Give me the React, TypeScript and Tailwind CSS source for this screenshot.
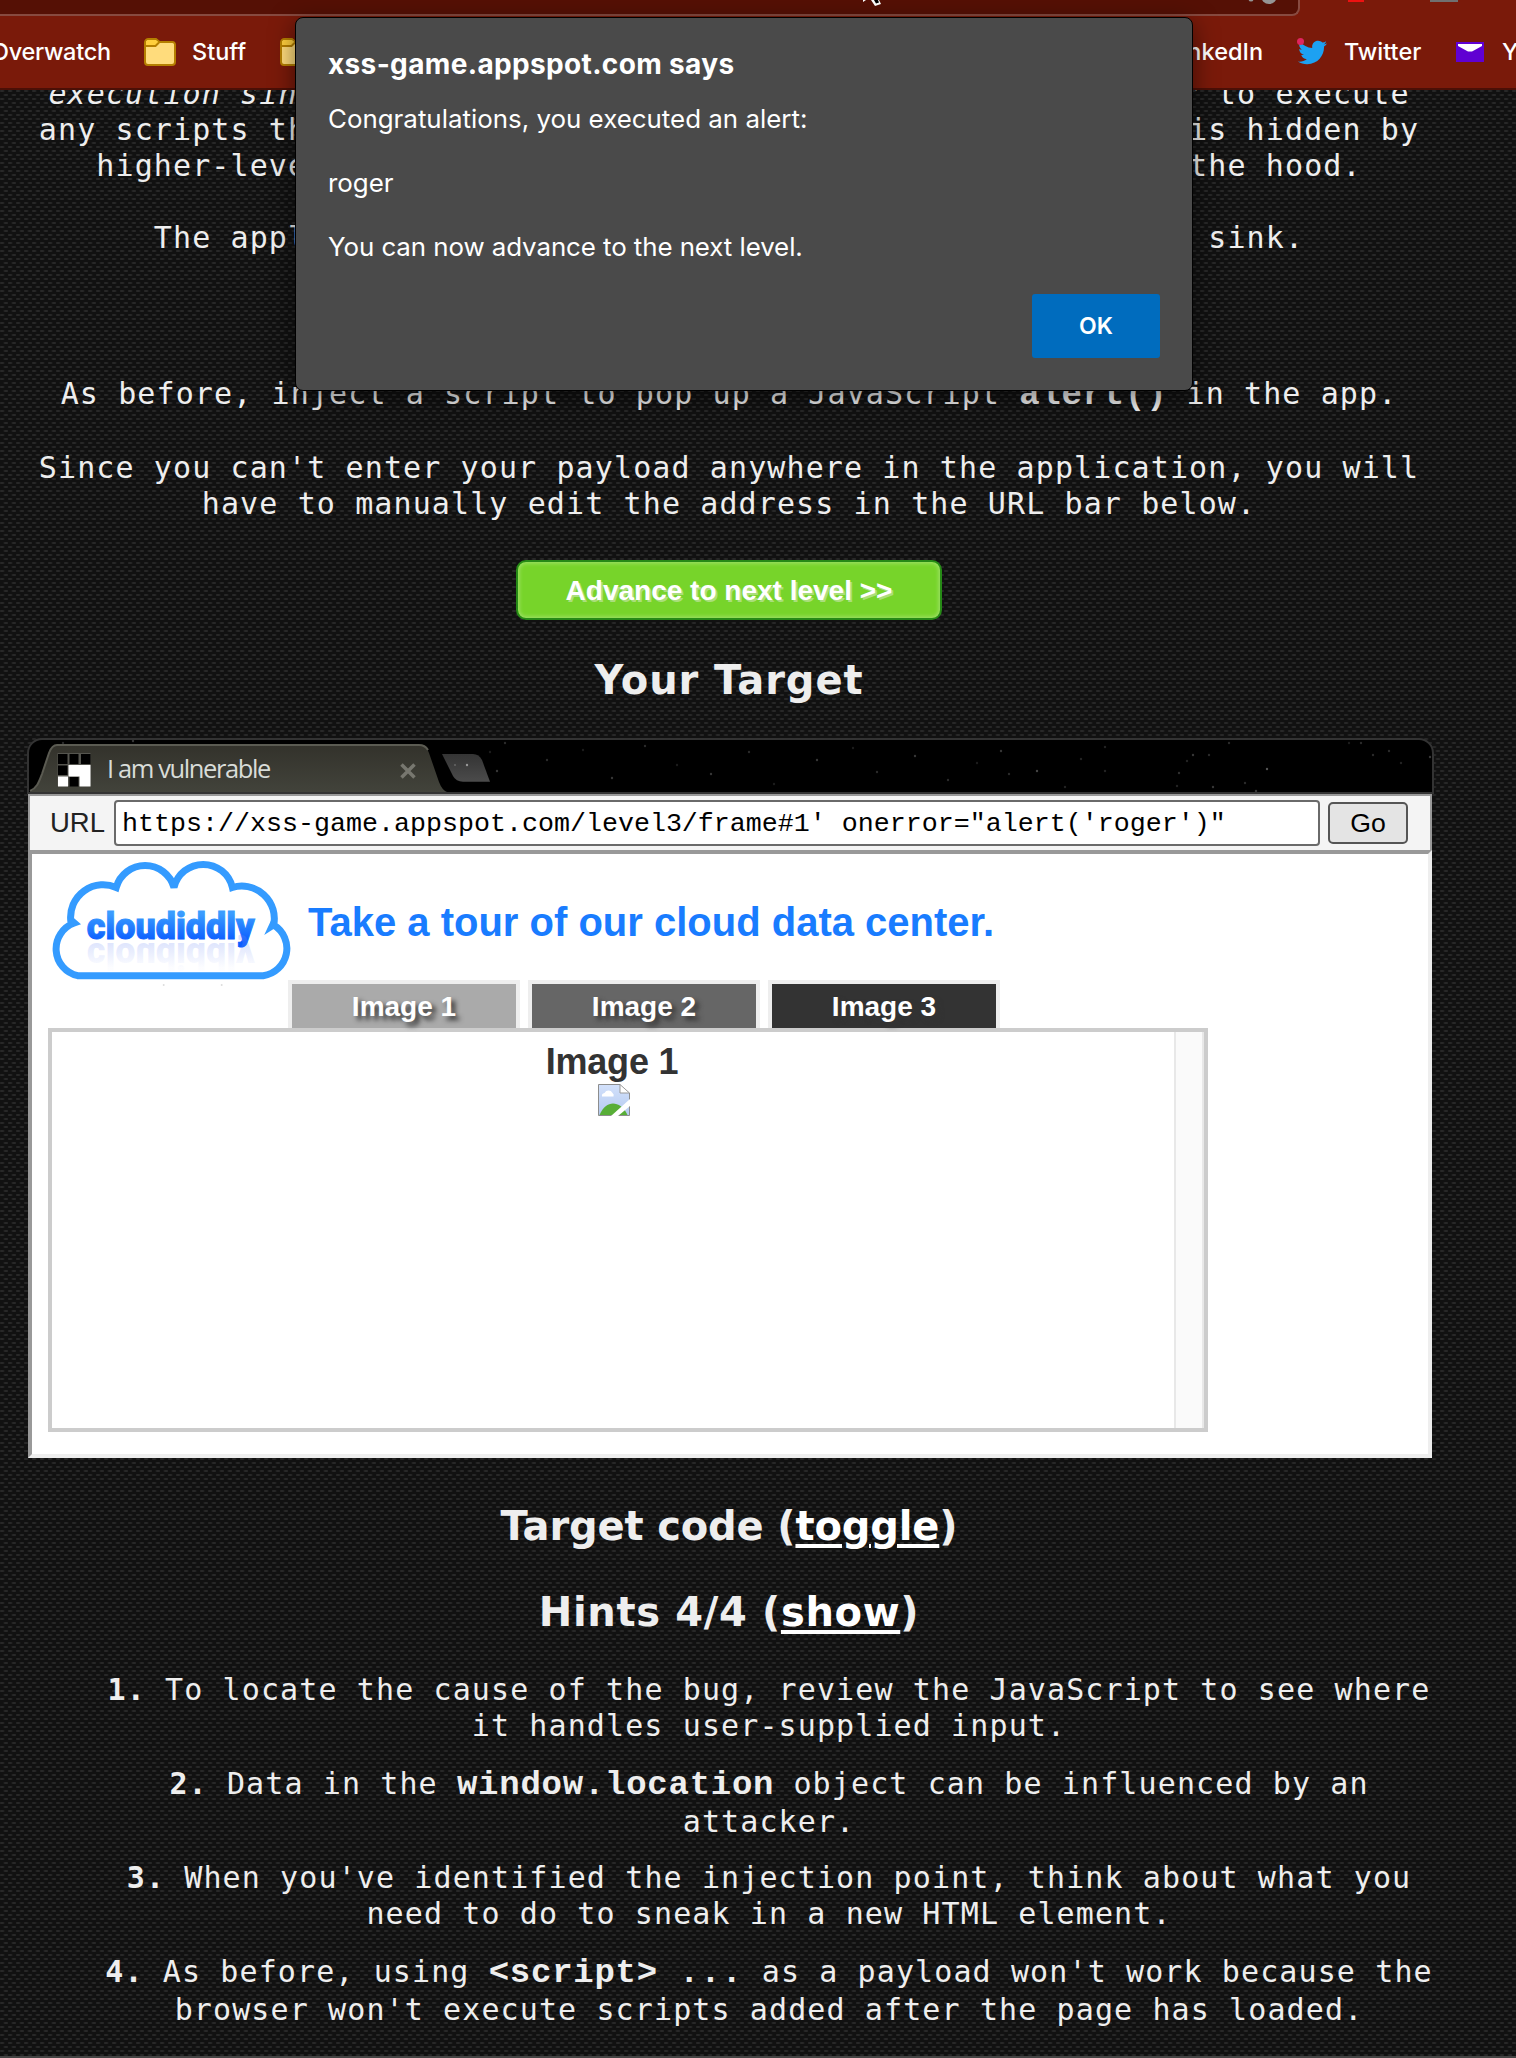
import React from "react";
import { FaTwitter } from "react-icons/fa";

const stars: [number, number, number][] = [
  [1078, 9, 0.25], [974, 13, 0.4], [1054, 21, 0.25], [1010, 33, 0.5], [982, 36, 0.3], [1166, 17, 0.4],
  [1160, 23, 0.25], [1182, 17, 0.3], [1152, 35, 0.35], [1240, 31, 0.6], [1202, 5, 0.3], [1218, 45, 0.3],
  [1186, 49, 0.4], [1229, 53, 0.4], [1322, 5, 0.2], [1334, 5, 0.3], [1346, 17, 0.3], [1362, 13, 0.3],
  [1374, 25, 0.25], [1403, 19, 0.4], [1078, 33, 0.25], [1150, 48, 0.25], [1038, 49, 0.25], [470, 33, 0.4],
  [478, 5, 0.3], [463, 14, 0.2], [520, 22, 0.3], [556, 12, 0.2], [585, 40, 0.4], [618, 8, 0.3], [650, 27, 0.2],
  [684, 36, 0.4], [722, 14, 0.3], [747, 46, 0.2], [790, 22, 0.4], [826, 10, 0.2], [850, 34, 0.3], [888, 18, 0.4],
  [921, 42, 0.3], [950, 25, 0.2], [106, 3, 0.4], [36, 5, 0.3],
];

function FolderIcon() {
  return (
    <svg viewBox="0 0 32 28" className="h-7 w-8 shrink-0">
      <path d="M1 4.5A3.5 3.5 0 0 1 4.500 1H12l3.500 3H28.500A2.500 2.500 0 0 1 31 6.500V24a3 3 0 0 1-3 3H4a3 3 0 0 1-3-3Z" fill="#ffdc7c" stroke="#b57f00" strokeWidth="2" />
      <path d="M2 4.500A2.500 2.500 0 0 1 4.500 2H11.700l3 2.500L12 7.500H2Z" fill="#ffcf3d" />
      <path d="M1 8H11.500L15 4.500" fill="none" stroke="#b57f00" strokeWidth="2" />
    </svg>
  );
}

function MailIcon() {
  return (
    <svg viewBox="0 0 28 20" className="h-5 w-7 shrink-0">
      <rect width="28" height="20" fill="#6001d2" />
      <path d="M2 2H26V4L16 9.500H12L2 4Z" fill="#fff" />
    </svg>
  );
}

function BookmarkBar() {
  return (
    <header className="relative z-10 h-[90px] overflow-hidden border-b-2 border-[#4b0f06] bg-[#7a1a0a]">
      <div className="relative h-4 w-[1300px] rounded-br-lg border-r-2 border-b-2 border-[#874a40] bg-[#551005]">
        <svg viewBox="0 0 1300 14" className="absolute top-0 left-0 h-[14px] w-[1300px]">
          <circle cx="1269" cy="-4" r="8" fill="#959595" />
          <circle cx="1251" cy="-1" r="2.500" fill="#959595" />
          <path d="M863 0v2l3-2zM871 0l4 6 6-2-2-4z" fill="#fff" />
          <path d="M874 0l2 3.500 3-1-1-2.500z" fill="#000" />
        </svg>
      </div>
      <div className="absolute top-0 left-[1348px] h-0.5 w-4 bg-[#ee1111]" />
      <div className="absolute top-0 left-[1430px] h-0.5 w-7 bg-[#707070]" />
      <nav className="flex h-[72px] items-center justify-between font-[Inter,sans-serif] text-[23.5px] font-medium text-white">
        <div className="flex h-full items-center">
          <span className="-ml-[9px] w-[153px] tracking-[-0.3px]">Overwatch</span>
          <FolderIcon />
          <span className="ml-4 w-[88px]">Stuff</span>
          <FolderIcon />
        </div>
        <div className="flex h-full items-center">
          <span className="w-[130px] tracking-[0.050px]">LinkedIn</span>
          <span className="relative w-[46px]">
            <FaTwitter className="size-[29px] text-[#1da1f2]" />
            <i className="absolute top-0 -left-px size-[7px] rounded-full bg-[#e0245e]" />
          </span>
          <span className="w-[112px]">Twitter</span>
          <MailIcon />
          <span className="ml-[18px] w-[14px]">Y</span>
        </div>
      </nav>
    </header>
  );
}

function AlertDialog() {
  return (
    <section className="absolute top-[17px] left-[295px] z-20 h-[374px] w-[898px] rounded-lg border border-black bg-[#4a4a4a] px-8 pt-[27px] font-[Inter,sans-serif] text-[25.900px] leading-8 text-white shadow-[0_6px_24px_rgba(0,0,0,0.5)]">
      <h1 className="mt-[3px] text-[28px] leading-8 font-bold tracking-[0.35px] whitespace-nowrap">xss-game.appspot.com says</h1>
      <p className="mt-[23px]">Congratulations, you executed an alert:</p>
      <p className="mt-8">roger</p>
      <p className="mt-8 tracking-[-0.080px]">You can now advance to the next level.</p>
      <div className="mt-[31px] flex justify-end">
        <button className="h-16 w-32 rounded-[3px] bg-[#006cbe] text-[23px] font-semibold">OK</button>
      </div>
    </section>
  );
}

function Code({ children }: { children: React.ReactNode }) {
  return <b className="font-['Liberation_Mono',monospace] text-[34px] leading-none font-bold tracking-[0.750px]">{children}</b>;
}

function Line({ children }: { children: React.ReactNode }) {
  return <span className="block h-9 whitespace-pre">{children}</span>;
}

function Cloud() {
  return (
    <svg viewBox="0 0 242 130" className="h-[130px] w-[242px] shrink-0 overflow-visible">
      <defs>
        <linearGradient id="ink" x1="0" y1="0" x2="0" y2="1">
          <stop offset="0.2" stopColor="#3a9dff" />
          <stop offset="0.85" stopColor="#0b5cff" />
        </linearGradient>
        <linearGradient id="mirror" x1="0" y1="0" x2="0" y2="1">
          <stop offset="0.2" stopColor="#6f8cf5" stopOpacity="0.02" />
          <stop offset="0.85" stopColor="#6f8cf5" stopOpacity="0.25" />
        </linearGradient>
      </defs>
      <g transform="translate(0.7 4)">
        <path
          d="M25 117.700A27.500 27.500 0 0 1 21.500 65L18 62A32.500 32.500 0 0 1 63.500 29.500A30 30 0 0 1 121.300 29.500A30 30 0 0 1 179.700 29.500A32.500 32.500 0 0 1 221 67A27.500 27.500 0 0 1 210.500 117.700Z"
          fill="none" stroke="#349bff" strokeWidth="7"
        />
        <path d="M218.500 62L211.500 77L225.500 68Z" fill="#349bff" />
        <text x="34" y="81" textLength="168" lengthAdjust="spacingAndGlyphs" fontFamily="Roboto, sans-serif" fontWeight="900" fontSize="37" fill="url(#ink)" stroke="url(#ink)" strokeWidth="1">cloudiddly</text>
        <text x="34" y="-85" transform="scale(1 -1)" textLength="168" lengthAdjust="spacingAndGlyphs" fontFamily="Roboto, sans-serif" fontWeight="900" fontSize="36" fill="url(#mirror)" aria-hidden="true">cloudiddly</text>
        <circle cx="111" cy="127" r="1" fill="#ddd" />
        <circle cx="169" cy="127" r="1" fill="#ddd" />
      </g>
    </svg>
  );
}

function BrokenImage() {
  return (
    <svg viewBox="0 0 32 32" className="size-8">
      <defs>
        <linearGradient id="sky" x1="0" y1="0" x2="0" y2="1">
          <stop offset="0" stopColor="#d3e1fb" />
          <stop offset="1" stopColor="#b4caf0" />
        </linearGradient>
      </defs>
      <path d="M0.500 0.500H22L31.500 9V31.500H0.500Z" fill="url(#sky)" />
      <path d="M1.500 31C5 23 10 19.500 15 19.500S26 23 29.500 31Z" fill="#58ae37" />
      <path d="M4 12.500a3 3 0 0 1 2.500-3.500a4.500 4.500 0 0 1 8 0a3 3 0 0 1 1 3.500Z" fill="#fff" />
      <path d="M22 0.500V9H31.500Z" fill="#fff" stroke="#999" />
      <path d="M22 0.500H0.500V31.500H31.500V9" fill="none" stroke="#8d8d8d" />
      <path d="M13 32L32 15V22L20 32Z" fill="#fff" />
    </svg>
  );
}

function TabStrip() {
  return (
    <div className="relative h-14 w-[1407px] overflow-hidden rounded-t-[15px] border-2 border-[#333] bg-black">
      <svg viewBox="2 2 1403 52" className="absolute inset-0 h-[52px] w-[1403px]">
        <defs>
          <linearGradient id="tab" x1="0" y1="0" x2="0" y2="1">
            <stop offset="0" stopColor="#33322b" />
            <stop offset="1" stopColor="#42433b" />
          </linearGradient>
          <linearGradient id="add" x1="0" y1="0" x2="0" y2="1">
            <stop offset="0" stopColor="#343434" />
            <stop offset="1" stopColor="#4b4b4b" />
          </linearGradient>
        </defs>
        {stars.map(([x, y, o]) => (
          <circle key={`${x}-${y}`} cx={x} cy={y} r="1.200" fill="#8a8a8a" opacity={o} />
        ))}
        <path d="M3 54C10 50 12 44 15 36L22 15Q25 7 30 7H392Q399 7 402 15L412 44Q415 52 420 54Z" fill="url(#tab)" />
        <path d="M3 53C10 50 12 44 15 36L22 15Q25 7 30 7H392Q398 7 401 12" fill="none" stroke="#5b5b52" strokeWidth="2" />
        <path d="M415 16H446Q452 16 455 22L463 43.700H436Q429 43.700 426 38Z" fill="url(#add)" />
        <circle cx="440" cy="27" r="1.200" fill="#999" />
        <circle cx="428" cy="27" r="1" fill="#666" />
        <rect x="30.500" y="15" width="33" height="33" fill="#55554f" />
        <path d="M31 16h9.500v10H31zM42.500 16h9v10h-9zM54 16h9.500v10H54zM31 27.500h9.500v9.500H31zM42.500 39h9v9.500h-9z" fill="#000" />
        <path d="M41.500 27h22v11.500h-22zM31 38.500h10v10H31zM52.500 38.500h11v10h-11z" fill="#fff" />
        <path d="M374.500 26.500l13 13M387.500 26.500l-13 13" stroke="#77776f" strokeWidth="3.500" />
      </svg>
      <span className="relative ml-[78px] block font-['Open_Sans',sans-serif] text-[25.500px] leading-[56px] font-medium tracking-[-1.400px] text-[#d8dcd8]">I am vulnerable</span>
    </div>
  );
}

const tabs = [
  { label: "Image 1", tone: "bg-[#aaa]" },
  { label: "Image 2", tone: "bg-[#666]" },
  { label: "Image 3", tone: "bg-[#333]" },
];

function TargetBrowser() {
  return (
    <div className="mt-[34px] ml-[27px] h-[720px] w-[1407px] font-['Liberation_Sans',Arial,sans-serif] tracking-normal">
      <TabStrip />
      <div className="ml-px flex h-14 w-[1404px] items-center border-2 border-b-0 border-[#999] bg-[#f4f4f4] pl-5">
        <span className="w-16 text-[27.500px] text-[#222]">URL</span>
        <div className="flex h-[46px] w-[1206px] items-center rounded-[4px] border-2 border-[#6a6a6a] bg-white pt-0.5 pl-[6px] font-['Liberation_Mono',monospace] text-[26.670px] whitespace-pre text-black">
          {`https://xss-game.appspot.com/level3/frame#1' onerror="alert('roger')"`}
        </div>
        <button className="ml-2 h-[42px] w-20 rounded-[5px] border-2 border-[#555] bg-[#e4e4e4] text-[26.670px] leading-none text-black">Go</button>
      </div>
      <div className="ml-px h-[608px] w-[1404px] border-4 border-t-[#999] border-r-[#eee] border-b-[#eee] border-l-[#999] bg-white pl-4">
        <div className="flex h-[126px] pl-1">
          <Cloud />
          <h2 className="ml-[14px] pt-10 text-[40px] leading-[56px] font-bold whitespace-nowrap text-[#197cff]">Take a tour of our cloud data center.</h2>
        </div>
        <div className="flex gap-2 pl-60">
          {tabs.map((t) => (
            <div key={t.label} className={`h-12 w-[232px] border-4 border-b-0 border-[#eee] text-center text-[28px] leading-[46px] font-bold text-white ${t.tone} [text-shadow:4px_4px_5px_#333]`}>
              {t.label}
            </div>
          ))}
        </div>
        <div className="flex h-[404px] w-[1160px] border-4 border-[#ccc]">
          <div className="flex flex-1 flex-col items-center pt-[7px]">
            <span className="-ml-0.5 text-[36px] leading-[46px] font-bold tracking-[-0.200px] text-[#333]">Image 1</span>
            <span className="-mt-px pl-0.5"><BrokenImage /></span>
          </div>
          <div className="w-[30px] border-x-2 border-[#e8e8e8] bg-[#fafafa]" />
        </div>
      </div>
    </div>
  );
}

function Heading({ className, children }: { className: string; children: React.ReactNode }) {
  return <h2 className={`w-[1458px] text-center font-['DejaVu_Sans',sans-serif] text-[40px] leading-[48px] font-bold ${className}`}>{children}</h2>;
}

export default function App() {
  return (
    <div className="relative h-[2058px] w-[1516px] overflow-hidden bg-[#111] bg-[radial-gradient(ellipse_3px_1.500px_at_2px_3px,#282828_50%,transparent),radial-gradient(ellipse_3px_1.500px_at_6px_7px,#282828_50%,transparent)] bg-[length:8px_8px] text-[#eee]">
      <BookmarkBar />
      <AlertDialog />
      <main className="-mt-[14px] font-['DejaVu_Sans_Mono',monospace] text-[30px] leading-9 tracking-[1.110px]">
        <div className="w-[1458px] text-center">
          <p>
            <Line><em>execution sinks</em> which means that they will cause the browser to execute</Line>
            <Line>any scripts that appear in their input. Sometimes this fact is hidden by</Line>
            <Line>higher-level APIs which use one of these functions under the hood.</Line>
          </p>
          <p className="mt-9"><Line>The application on this level is using one such hidden sink.</Line></p>
          <p className="mt-[120px]"><Line>As before, inject a script to pop up a JavaScript <Code>alert()</Code> in the app.</Line></p>
          <p className="mt-[38px]">
            <Line>Since you can't enter your payload anywhere in the application, you will</Line>
            <Line>have to manually edit the address in the URL bar below.</Line>
          </p>
          <button className="mx-auto mt-[38px] block h-[60px] w-[426px] rounded-[10px] border-2 border-[#268a16] bg-[#77d42a] pt-0.5 font-['Liberation_Sans',Arial,sans-serif] text-[28px] leading-none font-bold tracking-normal text-white shadow-[inset_0_0_4px_1px_#a4e271] [text-shadow:2px_2px_0_#aade7c]">
            Advance to next level &gt;&gt;
          </button>
        </div>
        <Heading className="mt-[36px] tracking-[0.950px]">Your Target</Heading>
        <TargetBrowser />
        <Heading className="mt-[44px] tracking-[-0.150px]">
          Target code (<a className="text-white underline decoration-4 underline-offset-4">toggle</a>)
        </Heading>
        <Heading className="mt-[38px] tracking-[0.650px]">
          Hints 4/4 (<a className="text-white underline decoration-4 underline-offset-4">show</a>)
        </Heading>
        <ol className="mt-[36px] ml-[107px] flex w-[1324px] flex-col gap-[22px] text-center">
          <li className="flex flex-col items-center">
            <Line><b>1.</b> To locate the cause of the bug, review the JavaScript to see where</Line>
            <Line>it handles user-supplied input.</Line>
          </li>
          <li>
            <Line><b>2.</b> Data in the <Code>window.location</Code> object can be influenced by an</Line>
            <span className="mt-0.5 -mb-0.5 block">attacker.</span>
          </li>
          <li>
            <Line><b>3.</b> When you've identified the injection point, think about what you</Line>
            <Line>need to do to sneak in a new HTML element.</Line>
          </li>
          <li className="flex flex-col items-center">
            <Line><b>4.</b> As before, using <Code>{"<script> ..."}</Code> as a payload won't work because the</Line>
            <span className="mt-0.5 block whitespace-nowrap">browser won't execute scripts added after the page has loaded.</span>
          </li>
        </ol>
      </main>
      <div className="absolute bottom-0 h-0.5 w-full bg-[#444]" />
    </div>
  );
}
